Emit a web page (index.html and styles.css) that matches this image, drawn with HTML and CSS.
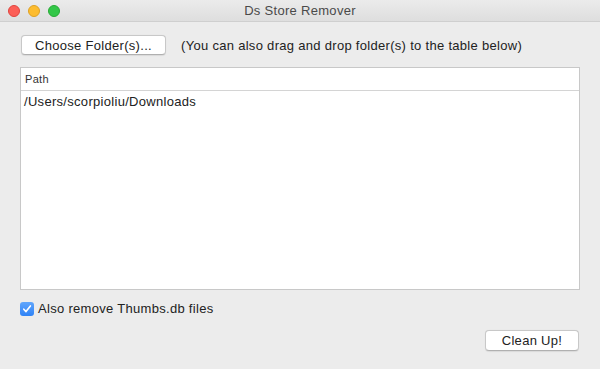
FILE: index.html
```html
<!DOCTYPE html>
<html>
  <head>
    <title>Ds Store Remover</title>
    <link rel="stylesheet" href="styles.css">
  </head>
  <body>
    <div class="window">
      <div class="titlebar">
        <div class="lights">
          <span class="light close"></span>
          <span class="light minimize"></span>
          <span class="light zoom"></span>
        </div>
        <div class="title">Ds Store Remover</div>
      </div>

      <div class="content">
        <div class="toolbar">
          <button type="button" class="btn choose-btn">Choose Folder(s)...</button>
          <span class="hint">(You can also drag and drop folder(s) to the table below)</span>
        </div>

        <div class="table-box">
          <table class="paths">
            <thead>
              <tr>
                <th>Path</th>
              </tr>
            </thead>
            <tbody>
              <tr>
                <td>/Users/scorpioliu/Downloads</td>
              </tr>
            </tbody>
          </table>
        </div>

        <label class="check-row">
          <span class="checkbox">
            <svg width="10" height="10" viewBox="0 0 10 10">
              <path d="M1.8 5.2 L4 7.6 L8.4 1.9" fill="none" stroke="#fff" stroke-width="1.6" stroke-linecap="round" stroke-linejoin="round" />
            </svg>
          </span>
          Also remove Thumbs.db files
        </label>

        <div class="footer">
          <button type="button" class="btn clean-btn">Clean Up!</button>
        </div>
      </div>
    </div>
  </body>
</html>
```

FILE: styles.css
```css
body {
  margin: 0;
  font-family: "Liberation Sans", Arial, sans-serif;
  font-size: 13px;
  letter-spacing: 0.3px;
  color: #222;
  background-color: #ececec;
}

.window {
  width: 600px;
  height: 369px;
  display: flex;
  flex-direction: column;
  background-color: #ececec;
  box-sizing: border-box;
}

.titlebar {
  height: 22px;
  box-sizing: border-box;
  position: relative;
  display: flex;
  align-items: center;
  justify-content: center;
  background: linear-gradient(#ebebeb, #dedede);
  border-bottom: 1px solid #cfcfcf;
}

.lights {
  position: absolute;
  left: 8px;
  top: 5px;
  display: flex;
  gap: 8px;
}

.light {
  width: 12px;
  height: 12px;
  border-radius: 50%;
  box-sizing: border-box;
}

.close {
  background-color: #fc5f57;
  border: 1px solid #e0443e;
}

.minimize {
  background-color: #fdbc2e;
  border: 1px solid #dea123;
}

.zoom {
  background-color: #33c748;
  border: 1px solid #27aa35;
}

.title {
  font-size: 13px;
  color: #4a4a4a;
}

.content {
  flex: 1;
  display: flex;
  flex-direction: column;
  padding: 13px 20px 0 20px;
}

.toolbar {
  display: flex;
  align-items: center;
  gap: 15px;
}

.btn {
  font-family: "Liberation Sans", Arial, sans-serif;
  font-size: 13px;
  letter-spacing: 0.3px;
  color: #222;
  height: 20px;
  padding: 0;
  background-color: #fff;
  border: 1px solid #c8c8c8;
  border-bottom-color: #b0b0b0;
  border-radius: 4px;
  box-shadow: 0 0.5px 1px rgba(0, 0, 0, 0.08);
}

.choose-btn {
  width: 145px;
  margin-left: 1px;
}

.hint {
  color: #222;
}

.table-box {
  margin-top: 12px;
  height: 223px;
  background-color: #fff;
  border: 1px solid #c8c8c8;
  box-sizing: border-box;
}

.paths {
  width: 100%;
  border-collapse: collapse;
}

.paths th {
  height: 22px;
  padding: 0 0 0 4px;
  text-align: left;
  font-weight: normal;
  font-size: 11px;
  color: #333;
  border-bottom: 1px solid #d4d4d4;
}

.paths td {
  height: 20px;
  padding: 0 0 0 3px;
  font-size: 13px;
  color: #222;
}

.check-row {
  margin-top: 11px;
  display: flex;
  align-items: center;
  gap: 4px;
  color: #222;
}

.checkbox {
  width: 14px;
  height: 14px;
  border-radius: 3px;
  background: linear-gradient(#60a6fc, #2f83f6);
  display: flex;
  align-items: center;
  justify-content: center;
}

.footer {
  margin-top: 14px;
  display: flex;
  justify-content: flex-end;
}

.clean-btn {
  width: 94px;
  height: 21px;
  margin-right: 1px;
}
```
